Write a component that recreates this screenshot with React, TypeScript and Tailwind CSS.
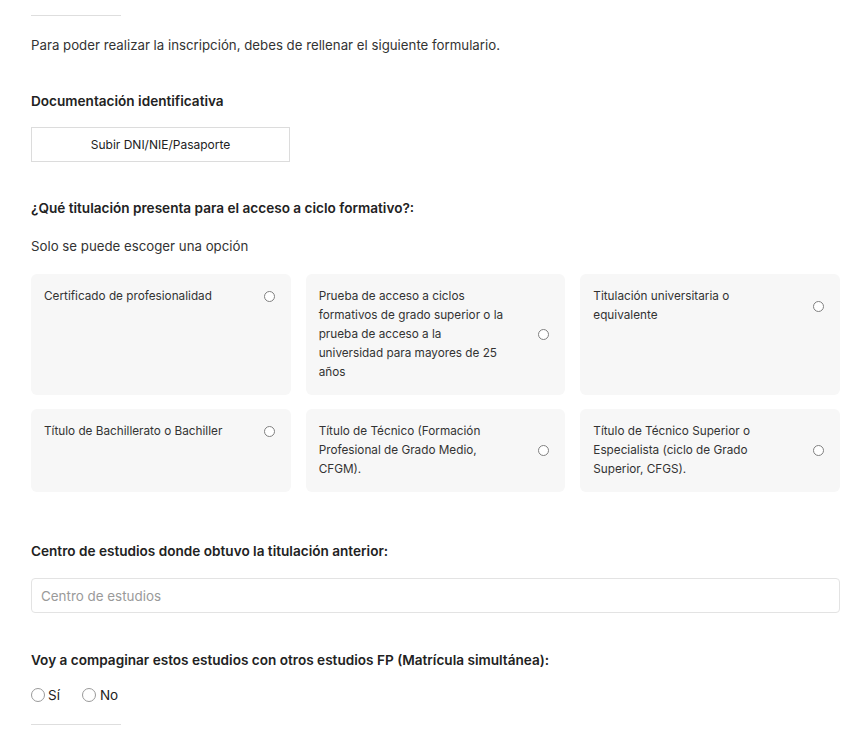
import React from "react";

const options = [
  "Certificado de profesionalidad",
  "Prueba de acceso a ciclos formativos de grado superior o la prueba de acceso a la universidad para mayores de 25 años",
  "Titulación universitaria o equivalente",
  "Título de Bachillerato o Bachiller",
  "Título de Técnico (Formación Profesional de Grado Medio, CFGM).",
  "Título de Técnico Superior o Especialista (ciclo de Grado Superior, CFGS).",
];

function OptionCard({ label }: { label: string }) {
  return (
    <label className="bg-[#f7f7f7] rounded-md p-[13px] cursor-pointer">
      <div className="flex items-center justify-between">
        <span className="w-[189px] text-[11.75px] leading-[19px] text-[#333]">{label}</span>
        <span className="w-[11px] h-[11px] rounded-full border border-[#808080] bg-white shrink-0 mr-[3px]" />
      </div>
    </label>
  );
}

export default function App() {
  return (
    <div className="bg-white min-h-screen pl-[31px] pr-[16px] text-[#222] font-['Inter',sans-serif]">
      <div className="pt-[15px]">
        <div className="w-[90px] h-px bg-[#dedede]" />
      </div>

      <p className="mt-[19px] text-[13.25px] leading-5 text-[#333]">
        Para poder realizar la inscripción, debes de rellenar el siguiente formulario.
      </p>

      <h3 className="mt-[36px] text-[13.6px] leading-5 font-semibold">Documentación identificativa</h3>
      <button className="mt-[16px] w-[259px] h-[35px] border border-[#dcdcdc] text-[12px] text-[#222] bg-white">
        Subir DNI/NIE/Pasaporte
      </button>

      <h3 className="mt-[36px] text-[13.6px] leading-5 font-semibold">
        ¿Qué titulación presenta para el acceso a ciclo formativo?:
      </h3>
      <p className="mt-[18px] text-[13.25px] leading-5 text-[#333]">Solo se puede escoger una opción</p>

      <div className="mt-[18px] grid grid-cols-3 gap-x-[15px] gap-y-[14px]">
        {options.map((o) => (
          <OptionCard key={o} label={o} />
        ))}
      </div>

      <h3 className="mt-[49px] text-[13.6px] leading-5 font-semibold">
        Centro de estudios donde obtuvo la titulación anterior:
      </h3>
      <input
        placeholder="Centro de estudios"
        className="mt-[17px] w-full h-[35px] border border-[#e3e3e3] rounded px-[9px] text-[13.4px] text-[#333] placeholder:text-[#9a9a9a] outline-none"
      />

      <h3 className="mt-[37px] text-[13.6px] leading-5 font-semibold">
        Voy a compaginar estos estudios con otros estudios FP (Matrícula simultánea):
      </h3>
      <div className="mt-[15px] flex items-center text-[13.5px] leading-5 text-[#222]">
        <label className="flex items-center gap-[3px]">
          <span className="w-[14px] h-[14px] rounded-full border border-[#9a9a9a]" />
          Sí
        </label>
        <label className="flex items-center gap-[4px] ml-[22px]">
          <span className="w-[14px] h-[14px] rounded-full border border-[#9a9a9a]" />
          No
        </label>
      </div>

      <div className="mt-[19px] w-[90px] h-px bg-[#dedede]" />
    </div>
  );
}
